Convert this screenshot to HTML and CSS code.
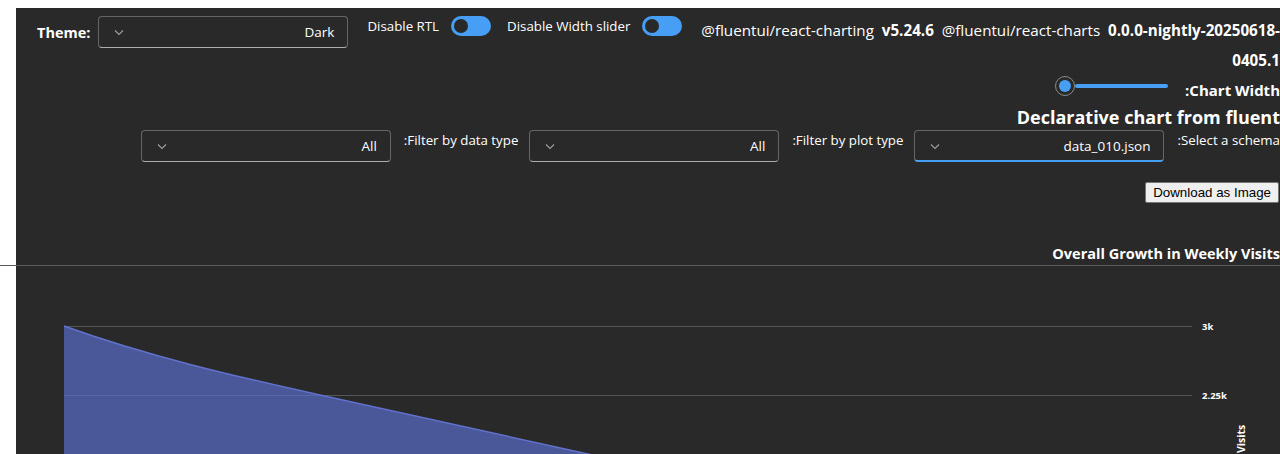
FILE: index.html
```html
<!DOCTYPE html>
<html lang="en">
<head>
<meta charset="utf-8">
<title>Declarative chart</title>
<link rel="stylesheet" href="styles.css">
</head>
<body>
<div class="panel">
  <div class="top-row">
    <div class="theme">
      <span class="theme-label">Theme:</span>
      <div class="dropdown">
        <svg class="chev" width="12" height="12" viewBox="0 0 12 12"><path d="M2 4.5 L6 8.5 L10 4.5" fill="none" stroke="#9e9e9e" stroke-width="1.1"/></svg>
        <span class="dd-value">Dark</span>
      </div>
    </div>
    <div class="switch-group first">
      <span class="switch-label">Disable RTL</span>
      <span class="switch"><span class="knob"></span></span>
    </div>
    <div class="switch-group">
      <span class="switch-label">Disable Width slider</span>
      <span class="switch"><span class="knob"></span></span>
    </div>
    <div class="versions">@fluentui/react-charting&nbsp; <b>v5.24.6</b>&nbsp; @fluentui/react-charts&nbsp; <b>0.0.0-nightly-20250618-<br>0405.1</b></div>
  </div>

  <div class="slider-row">
    <div class="slider">
      <span class="thumb"><span class="thumb-dot"></span></span>
      <span class="track"></span>
    </div>
    <span class="slider-label">:Chart Width</span>
  </div>

  <h1 class="heading">Declarative chart from fluent</h1>

  <div class="filter-row">
    <div class="dropdown">
      <svg class="chev" width="12" height="12" viewBox="0 0 12 12"><path d="M2 4.5 L6 8.5 L10 4.5" fill="none" stroke="#9e9e9e" stroke-width="1.1"/></svg>
      <span class="dd-value">All</span>
    </div>
    <span class="filter-label">:Filter by data type</span>
    <div class="dropdown">
      <svg class="chev" width="12" height="12" viewBox="0 0 12 12"><path d="M2 4.5 L6 8.5 L10 4.5" fill="none" stroke="#9e9e9e" stroke-width="1.1"/></svg>
      <span class="dd-value">All</span>
    </div>
    <span class="filter-label">:Filter by plot type</span>
    <div class="dropdown focused">
      <svg class="chev" width="12" height="12" viewBox="0 0 12 12"><path d="M2 4.5 L6 8.5 L10 4.5" fill="none" stroke="#9e9e9e" stroke-width="1.1"/></svg>
      <span class="dd-value">data_010.json</span>
    </div>
    <span class="filter-label">:Select a schema</span>
  </div>

  <div class="download-row">
    <button class="download" type="button">Download as Image</button>
  </div>

  <div class="chart-title">Overall Growth in Weekly Visits</div>
  <div class="divider"></div>

  <svg class="chart" width="1264" height="188" viewBox="0 0 1264 188">
    <line x1="48" y1="60.5" x2="1176" y2="60.5" stroke="#555" stroke-width="1"/>
    <line x1="48" y1="129.5" x2="1176" y2="129.5" stroke="#555" stroke-width="1"/>
    <path d="M48,60 C133,90.6 219,110.3 304,129 L640,203 L48,203 Z" fill="rgb(88,107,201)" fill-opacity="0.7"/>
    <path d="M48,60 C133,90.6 219,110.3 304,129 L640,203" fill="none" stroke="rgb(96,114,205)" stroke-width="1.5"/>
    <text x="1186" y="63.5" class="tick">3k</text>
    <text x="1186" y="132.5" class="tick">2.25k</text>
    <text class="axis-title" transform="translate(1229,187) rotate(-90)">Visits</text>
  </svg>
</div>
</body>
</html>
```
FILE: styles.css
```css
html, body {
  margin: 0;
  padding: 0;
  background: #ffffff;
  overflow: hidden;
}

body {
  width: 1280px;
  height: 454px;
  font-family: "Open Sans", "Noto Sans", sans-serif;
}

.panel {
  margin: 8px 0 0 16px;
  background: #292929;
  color: #ffffff;
  height: 446px;
  padding-top: 8px;
  box-sizing: border-box;
}

.top-row {
  display: flex;
  align-items: flex-start;
  padding-left: 21px;
}

.theme {
  display: flex;
  align-items: center;
  gap: 8px;
  flex-shrink: 0;
}

.theme-label {
  font-size: 14.5px;
  font-weight: 700;
}

.dropdown {
  width: 250px;
  height: 32px;
  box-sizing: border-box;
  border: 1px solid #666666;
  border-bottom-color: #adadad;
  border-radius: 4px;
  display: flex;
  align-items: center;
  justify-content: space-between;
  padding: 0 13px 0 14px;
  flex-shrink: 0;
}

.dropdown.focused {
  border-bottom: 2px solid #479ef5;
}

.chev {
  display: block;
}

.dd-value {
  font-size: 13.5px;
  color: #ffffff;
}

.switch-group {
  display: flex;
  align-items: center;
  gap: 12px;
  margin-left: 16px;
  height: 20px;
  flex-shrink: 0;
  white-space: nowrap;
}

.switch-group.first {
  margin-left: 19px;
}

.switch-label {
  font-size: 13.3px;
}

.switch {
  width: 40px;
  height: 20px;
  border-radius: 10px;
  background: #479ef5;
  display: flex;
  align-items: center;
  padding-left: 3px;
  box-sizing: border-box;
  flex-shrink: 0;
}

.knob {
  width: 14px;
  height: 14px;
  border-radius: 50%;
  background: #292929;
}

.versions {
  flex: 1;
  min-width: 0;
  margin-left: 16px;
  margin-top: -1px;
  font-size: 15.2px;
  line-height: 30px;
  text-align: right;
  white-space: nowrap;
}

.slider-row {
  display: flex;
  justify-content: flex-end;
  align-items: flex-start;
  margin-top: 1px;
}

.slider {
  display: flex;
  align-items: center;
  height: 20px;
  width: 113px;
}

.thumb {
  width: 20px;
  height: 20px;
  box-sizing: border-box;
  border-radius: 50%;
  border: 1px solid #8a8a8a;
  background: #292929;
  display: flex;
  align-items: center;
  justify-content: center;
  flex-shrink: 0;
}

.thumb-dot {
  width: 12px;
  height: 12px;
  border-radius: 50%;
  background: #479ef5;
}

.track {
  flex: 1;
  height: 4px;
  border-radius: 2px;
  background: #479ef5;
}

.slider-label {
  margin-left: 17px;
  margin-top: 3px;
  font-size: 15px;
  font-weight: 700;
  line-height: 22px;
}

.heading {
  margin: 3px 0 0 0;
  font-size: 18px;
  font-weight: 700;
  line-height: 26px;
  text-align: right;
}

.filter-row {
  display: flex;
  justify-content: flex-end;
  align-items: flex-start;
}

.filter-label {
  font-size: 13.3px;
  line-height: 20px;
  margin: 0 11px 0 13px;
  white-space: nowrap;
}

.filter-label:last-child {
  margin-right: 0;
}

.download-row {
  display: flex;
  justify-content: flex-end;
  margin-top: 20px;
  padding-right: 1px;
}

.download {
  height: 21px;
  box-sizing: border-box;
  padding: 0 7px;
  font-family: "Liberation Sans", Arial, sans-serif;
  font-size: 13.33px;
  color: #000000;
  background: #efefef;
  border: 1px solid #767676;
  border-radius: 2px;
}

.chart-title {
  margin-top: 41px;
  font-size: 14.5px;
  font-weight: 700;
  line-height: 20px;
  text-align: right;
}

.divider {
  margin: 1px 0 0 -16px;
  height: 0;
  border-top: 1px solid #5a5a5a;
}

.chart {
  display: block;
}

.tick {
  font-family: "Open Sans", sans-serif;
  font-size: 9.5px;
  font-weight: 700;
  fill: #ffffff;
}

.axis-title {
  font-family: "Open Sans", sans-serif;
  font-size: 10.5px;
  font-weight: 700;
  fill: #ffffff;
}
```
